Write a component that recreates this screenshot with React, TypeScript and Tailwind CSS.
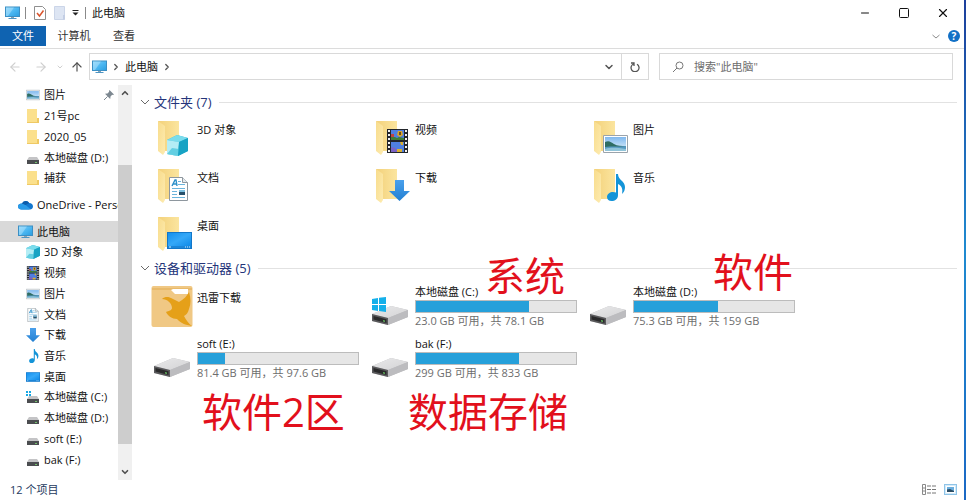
import type { ReactNode } from "react"
import clsx from "clsx"
import { ArrowLeft, ArrowRight, ArrowUp, ChevronDown, ChevronRight, ChevronUp, Minus, Square, X } from "lucide-react"

type IconName =
  | "pc"
  | "cloud"
  | "folder"
  | "cube"
  | "video"
  | "picture"
  | "document"
  | "download"
  | "music"
  | "desktop"
  | "drive"
  | "system-drive"

type NavItem = { name: string; icon: IconName; pinned?: boolean }

type Drive = {
  name: string
  free: number
  total: number
  summary: string
  system?: boolean
  note: string
  noteClass: string
}

const quickAccess: NavItem[] = [
  { name: "图片", icon: "picture", pinned: true },
  { name: "21号pc", icon: "folder" },
  { name: "2020_05", icon: "folder" },
  { name: "本地磁盘 (D:)", icon: "drive" },
  { name: "捕获", icon: "folder" },
]

const computerItems: NavItem[] = [
  { name: "3D 对象", icon: "cube" },
  { name: "视频", icon: "video" },
  { name: "图片", icon: "picture" },
  { name: "文档", icon: "document" },
  { name: "下载", icon: "download" },
  { name: "音乐", icon: "music" },
  { name: "桌面", icon: "desktop" },
  { name: "本地磁盘 (C:)", icon: "system-drive" },
  { name: "本地磁盘 (D:)", icon: "drive" },
  { name: "soft (E:)", icon: "drive" },
  { name: "bak (F:)", icon: "drive" },
]

const folders: NavItem[] = [
  { name: "3D 对象", icon: "cube" },
  { name: "视频", icon: "video" },
  { name: "图片", icon: "picture" },
  { name: "文档", icon: "document" },
  { name: "下载", icon: "download" },
  { name: "音乐", icon: "music" },
  { name: "桌面", icon: "desktop" },
]

const drives: Drive[] = [
  { name: "本地磁盘 (C:)", free: 23, total: 78.1, summary: "23.0 GB 可用，共 78.1 GB", system: true, note: "系统", noteClass: "left-[116px] -top-7" },
  { name: "本地磁盘 (D:)", free: 75.3, total: 159, summary: "75.3 GB 可用，共 159 GB", note: "软件", noteClass: "left-[126px] -top-8" },
  { name: "soft (E:)", free: 81.4, total: 97.6, summary: "81.4 GB 可用，共 97.6 GB", note: "软件2区", noteClass: "left-[51px] top-14" },
  { name: "bak (F:)", free: 299, total: 833, summary: "299 GB 可用，共 833 GB", note: "数据存储", noteClass: "left-[39px] top-14" },
]

function Gradients() {
  return (
    <svg className="absolute size-0" aria-hidden="true">
      <defs>
        <linearGradient id="screen" x1="0" y1="0" x2="1" y2="1">
          <stop offset="0" stopColor="#8fd6fb" />
          <stop offset="0.5" stopColor="#4db8f2" />
          <stop offset="1" stopColor="#2a9de0" />
        </linearGradient>
        <linearGradient id="paper" x1="0" y1="0" x2="1" y2="0">
          <stop offset="0" stopColor="#f3d17a" />
          <stop offset="1" stopColor="#fbe59f" />
        </linearGradient>
        <linearGradient id="flap" x1="0" y1="0" x2="1" y2="1">
          <stop offset="0" stopColor="#f8dc8c" />
          <stop offset="1" stopColor="#fdebb0" />
        </linearGradient>
        <linearGradient id="arrow" x1="0" y1="0" x2="0" y2="1">
          <stop offset="0" stopColor="#4aa0ec" />
          <stop offset="1" stopColor="#2380d2" />
        </linearGradient>
        <linearGradient id="desk" x1="0" y1="0" x2="1" y2="1">
          <stop offset="0" stopColor="#1490ee" />
          <stop offset="0.5" stopColor="#35a8f8" />
          <stop offset="1" stopColor="#0f8ae8" />
        </linearGradient>
        <linearGradient id="sky" x1="0" y1="0" x2="0" y2="1">
          <stop offset="0" stopColor="#7fb8ee" />
          <stop offset="1" stopColor="#e4f3fb" />
        </linearGradient>
        <linearGradient id="metal" x1="0" y1="0" x2="1" y2="1">
          <stop offset="0" stopColor="#e9e9ea" />
          <stop offset="1" stopColor="#d3d3d5" />
        </linearGradient>
      </defs>
    </svg>
  )
}

function PcIcon({ className }: { className: string }) {
  return (
    <svg viewBox="0 0 15 14" className={className} aria-hidden="true">
      <rect x="0.5" y="1" width="14" height="9.5" fill="url(#screen)" stroke="#3b8fc4" />
      <path d="M1 1.5h8L3 10H1z" fill="#b5e5fd" opacity="0.5" />
      <path d="M6 11h3v1H6z" fill="#8ba3b3" />
      <path d="M3.5 12h8v1h-8z" fill="#4e95c4" />
    </svg>
  )
}

function Cube() {
  return (
    <g>
      <path d="M0 5 10 0l11 3v13l-10 5-11-2z" fill="#35b9d4" />
      <path d="M0 5 10 0l11 3-9 4z" fill="#7adcec" />
      <path d="m0 5 12 2-1 14-11-2z" fill="#b4edf5" />
      <path d="m0 19 5-6 7 1-1 7z" fill="#63cfe2" />
      <path d="m12 7 9-4v13l-10 5z" fill="#17a3c4" />
    </g>
  )
}

function Film() {
  return (
    <g>
      <path d="M0 0h21v24H0z" fill="#22252b" />
      <path d="M4 1h13v10H4zM4 13h13v10H4z" fill="#4f7fe0" />
      <path d="M4 8h4l2 1 2-1 5 1v2H4z" fill="#3f7d35" />
      <path d="M4 5h3v3H4z" fill="#c1443f" />
      <path d="M11 2h4l1 4-3 2-3-2z" fill="#d8a62c" />
      <path d="M12 3h2v3h-2z" fill="#6d4a1c" />
      <path d="m4 18 4 1 2 2 1 2H4z" fill="#7a62c5" />
      <path d="M13 13h3v3h-2zM10 20h5v3h-5z" fill="#dbb02f" />
      <path d="M2 1v23M19 1v23" stroke="#f3f3f3" strokeWidth="2" strokeDasharray="2 2" />
    </g>
  )
}

function Photo() {
  return (
    <g>
      <path d="M0.5 0.5h24v17H0.5z" fill="#fff" stroke="#9aa3ab" />
      <path d="M2 2h21v14H2z" fill="url(#sky)" />
      <path d="M2 7c4-2 6 0 9 2s8 2 12 2v2H2z" fill="#2f6d62" />
      <path d="M2 12c6-1 12 0 21-1v5H2z" fill="#5699c0" />
      <path d="M2 14c7-2 12-1 21 0v2H2z" fill="#90c4d9" />
    </g>
  )
}

function Page() {
  return (
    <g>
      <path d="M0.5 0.5h13l5 5v18H0.5z" fill="#fff" stroke="#8e979e" />
      <path d="M13.5 0.5v5h5" fill="#e3e9ed" stroke="#8e979e" />
      <path d="m3 9 3-6h1l1 6M4 7h4" fill="none" stroke="#2b8fc9" strokeWidth="1.4" />
      <path d="M9 4.500h3M9 7.500h7M3 11.500h13M3 14.500h5M3 17.500h5M3 20.500h13" stroke="#6bb4dc" />
      <path d="M10 13h6v5h-6z" fill="#27506b" />
      <path d="M10 13h6v2h-6z" fill="#7dc0e0" />
    </g>
  )
}

function DownArrow() {
  return <path d="M6 0h9v11h6L10.500 21 0 11h6z" fill="url(#arrow)" />
}

function Note() {
  return (
    <path
      d="M9 0h2c0 6 7 7 7 13 0 3-1 5-3 7 1-5 0-8-4-10v11c0 4-3 6-6.500 6C2 27 0 25.500 0 23c0-3 3-5 6-5 1 0 2 .2 3 .6z"
      fill="#1494d8"
    />
  )
}

function Desktop() {
  return (
    <g>
      <path d="M0 0h25v17H0z" fill="#1277c9" />
      <path d="M1 1h23v13H1z" fill="url(#desk)" />
      <path d="M1 14h23v2H1z" fill="#1c86d8" />
      <path d="M2 15h2M18 15h1M20 15h1M22 15h1" stroke="#cdeaff" />
    </g>
  )
}

function DriveBody() {
  return (
    <g>
      <path d="M0 8 19 0l17 4v7l-20 8-16-4z" fill="#bdbdc0" />
      <path d="M0 8 19 0l17 4-20 8z" fill="url(#metal)" />
      <path d="m16 12 20-8v7l-20 8z" fill="#bcbcbf" />
      <path d="m0 8 16 4v7L0 15z" fill="#5a5a5c" />
      <path d="m1.500 10 13 3.300v3.600l-13-3.400z" fill="#2a2a2b" />
      <path d="m11 14 2 .5v1.500l-2-.5z" fill="#5fae5b" />
    </g>
  )
}

function WindowsLogo() {
  return <path d="m0 2 6-1v6H0zm7-1.200L14 0v7H7zM0 8h6v6l-6-1zm7 0h7v7l-7-1z" fill="#15b0ea" />
}

// the shape that sits on the folder, placed inside its 42x40 box
const overlays: Partial<Record<IconName, { shape: ReactNode; at: string }>> = {
  cube: { shape: <Cube />, at: "translate(16 17)" },
  video: { shape: <Film />, at: "translate(18 11)" },
  picture: { shape: <Photo />, at: "translate(16 17)" },
  document: { shape: <Page />, at: "translate(18 11)" },
  download: { shape: <DownArrow />, at: "translate(20 14)" },
  music: { shape: <Note />, at: "translate(20 8)" },
  desktop: { shape: <Desktop />, at: "translate(16 18)" },
}

function FolderIcon({ icon }: { icon: IconName }) {
  const overlay = overlays[icon]
  return (
    <svg viewBox="0 0 42 40" className="h-10 w-[42px] shrink-0" aria-hidden="true">
      <path d="M7 3h21v30H13z" fill="url(#paper)" />
      <path d="m7 3 7 5v26l-2 3-5-4z" fill="url(#flap)" />
      <g transform={overlay?.at}>{overlay?.shape}</g>
    </svg>
  )
}

function SmallIcon({ icon }: { icon: IconName }) {
  if (icon === "pc") return <PcIcon className="h-3.5 w-[15px] shrink-0" />
  if (icon === "cloud") {
    return (
      <svg viewBox="0 0 15 10" className="h-2.5 w-[15px] shrink-0" aria-hidden="true">
        <path d="M4 3.500A4 4 0 0 1 11.200 3C13.500 3 15 4.500 15 6.500S13.500 9.500 12 9.500H3.500C1.500 9.500 0 8.200 0 6.500S1.500 3.500 4 3.500z" fill="#1377cf" />
        <path d="M4 3.500c2 0 3 1 8 5l-1 1H3.500C1.500 9.500 0 8.200 0 6.500S1.500 3.500 4 3.500z" fill="#2a9be8" />
        <path d="M4 3.500A4 4 0 0 1 11.200 3L7.500 5z" fill="#0c5cab" />
      </svg>
    )
  }
  if (icon === "folder") {
    return (
      <svg viewBox="0 0 14 14" className="size-3.5 shrink-0" aria-hidden="true">
        <path d="M1 0h10v9h2v5H1z" fill="#fbe08c" />
        <path d="M11 9h2v5h-2zM1 13h10v1H1z" fill="#efc964" />
      </svg>
    )
  }
  const views: Record<string, { box: string; shape: ReactNode }> = {
    cube: { box: "0 0 21 21", shape: <Cube /> },
    video: { box: "-1 0 23 24", shape: <Film /> },
    picture: { box: "0 -3 25 24", shape: <Photo /> },
    document: { box: "-2 0 23 24", shape: <Page /> },
    download: { box: "0 0 21 21", shape: <DownArrow /> },
    music: { box: "-6 0 27 27", shape: <Note /> },
    desktop: { box: "0 -4 25 25", shape: <Desktop /> },
  }
  const view = views[icon]
  if (view) {
    return (
      <svg viewBox={view.box} className="size-3.5 shrink-0" aria-hidden="true">
        {view.shape}
      </svg>
    )
  }
  return (
    <svg viewBox="0 0 14 14" className="size-3.5 shrink-0" aria-hidden="true">
      <path d="M3 6h8l2 3H1z" fill="#c4c4c6" />
      <path d="M1 9h12v4H1z" fill="#4b4d50" />
      <path d="M9 11h2v1H9z" fill="#74c06d" />
      {icon === "system-drive" && <path d="M0 1h2v2H0zM3 1h2v2H3zM0 4h2v2H0zM3 4h2v2H3z" fill="#15a7e4" />}
    </svg>
  )
}

function XunleiIcon() {
  return (
    <svg viewBox="0 0 42 41" className="h-[41px] w-[42px] shrink-0" aria-hidden="true">
      <rect x="0.5" width="41" height="41" rx="2" fill="#f0c884" />
      <path d="M1 2h40v2H1z" fill="#e2ab52" opacity="0.5" />
      <path d="m20 4 2-1h15v5H24z" fill="#fff" />
      <path
        d="M11 13c3-3 7-2 9-1l8 4c5-3 8-6 10-10 2 6 2 12 0 17-1 4-3 6-5 7 2 4 5 8 8 10-7-1-11-3-15-7-5 0-9-3-11-7 3-1 6-2 6-4 0-5-5-9-10-9z"
        fill="#e5a019"
      />
    </svg>
  )
}

function NavRow({ item, root, selected }: { item: NavItem; root?: boolean; selected?: boolean }) {
  return (
    <button
      type="button"
      className={clsx(
        "flex min-h-4 flex-1 items-center gap-1 whitespace-nowrap pr-1 text-left",
        root ? "pl-[18px]" : "pl-[26px]",
        selected && "bg-[#d9d9d9]"
      )}
    >
      <SmallIcon icon={item.icon} />
      <span>{item.name}</span>
      {item.pinned && (
        <svg viewBox="0 0 10 10" className="ml-auto size-2.5" aria-hidden="true">
          <path d="m5.500 0 4.500 4.500-1 .5-.8-.2L6.500 6.500 6.200 9 1 3.800l2.500-.3 1.700-1.700L5 1z" fill="#7d8891" />
          <path d="M3.600 6.400 0 10" stroke="#7d8891" />
        </svg>
      )}
    </button>
  )
}

function Sidebar() {
  return (
    <aside className="flex w-[132px] shrink-0 pt-px">
      <nav aria-label="导航窗格" className="flex min-w-0 flex-1 flex-col overflow-hidden pb-2.5">
        {quickAccess.map((item) => (
          <NavRow key={item.name} item={item} />
        ))}
        <div className="h-1.5" />
        <NavRow item={{ name: "OneDrive - Personal", icon: "cloud" }} root />
        <div className="h-1.5" />
        <NavRow item={{ name: "此电脑", icon: "pc" }} root selected />
        {computerItems.map((item) => (
          <NavRow key={item.name} item={item} />
        ))}
      </nav>
      <div className="flex w-3.5 flex-col items-center bg-[#f0f0f0] text-[#505050]">
        <button type="button" aria-label="向上滚动" className="grid h-4 place-items-center">
          <ChevronUp className="size-2.5" strokeWidth={4} />
        </button>
        <div className="flex w-full flex-1 flex-col">
          <div className="flex-[64]" />
          <div className="flex-[279] bg-[#cdcdcd]" />
          <div className="flex-[20]" />
        </div>
        <button type="button" aria-label="向下滚动" className="grid h-4 place-items-center">
          <ChevronDown className="size-2.5" strokeWidth={4} />
        </button>
      </div>
    </aside>
  )
}

function GroupHeader({ children }: { children: ReactNode }) {
  return (
    <h2 className="flex h-5 items-center gap-2 text-[13px] text-[#24347a]">
      <button type="button" className="flex items-center gap-1">
        <svg viewBox="0 0 10 10" className="size-2.5" aria-hidden="true">
          <path d="m1 3 4 4 4-4" fill="none" stroke="#6a6a6a" />
        </svg>
        {children}
      </button>
      <span className="h-px flex-1 bg-[#e2e2e2]" />
    </h2>
  )
}

function DriveTile({ drive }: { drive: Drive }) {
  const used = ((drive.total - drive.free) / drive.total) * 100
  return (
    <li className="relative flex gap-1 pt-1">
      <svg viewBox="0 0 42 41" className="h-[41px] w-[42px] shrink-0" aria-hidden="true">
        <g transform="translate(3 20)">
          <DriveBody />
        </g>
        {drive.system && (
          <g transform="translate(3 11)">
            <WindowsLogo />
          </g>
        )}
      </svg>
      <div className="w-[162px] leading-4">
        <p className="-mt-0.5">{drive.name}</p>
        <div className="h-[13px] border border-[#bcbcbc] bg-[#e6e6e6]">
          <div className="h-full bg-[#26a0da]" style={{ width: `${used}%` }} />
        </div>
        <p className="whitespace-nowrap text-[#6d6d6d]">{drive.summary}</p>
      </div>
      <span className={clsx("absolute whitespace-nowrap text-[40px] leading-[44px] text-[#e2101c]", drive.noteClass)}>
        {drive.note}
      </span>
    </li>
  )
}

function TitleBar() {
  return (
    <header className="flex h-[26px] items-center pl-[5px] pr-0.5">
      <PcIcon className="h-3.5 w-[15px]" />
      <span className="ml-[5px] h-3 w-px bg-[#8a8a8a]" />
      <button type="button" aria-label="属性" className="ml-2">
        <svg viewBox="0 0 12 14" className="h-3.5 w-3">
          <path d="M0.500 0.500h8l3 3v10h-11z" fill="#fff" stroke="#8f8f8f" />
          <path d="m3 7 2.500 3L9.500 4.500" fill="none" stroke="#d9532c" strokeWidth="1.500" />
        </svg>
      </button>
      <button type="button" aria-label="新建文件夹" className="ml-2">
        <svg viewBox="0 0 12 14" className="h-3.5 w-3">
          <path d="M0.500 0.500h10v13h-10z" fill="#dde5f3" stroke="#cbd5e8" />
          <path d="M9 9h2v4.500H9z" fill="#c3cee4" />
        </svg>
      </button>
      <button type="button" aria-label="自定义快速访问工具栏" className="ml-1.5">
        <svg viewBox="0 0 7 6" className="h-1.5 w-[7px]">
          <path d="M0.500 0h6v1h-6zM0.500 2.500h6l-3 3z" fill="#222" />
        </svg>
      </button>
      <span className="ml-1.5 mr-1.5 h-3 w-px bg-[#8a8a8a]" />
      <h1>此电脑</h1>
      <div className="ml-auto flex">
        <button type="button" aria-label="最小化" className="grid h-6 w-[39px] place-items-center">
          <Minus className="size-3" strokeWidth={2} />
        </button>
        <button type="button" aria-label="最大化" className="grid h-6 w-[39px] place-items-center">
          <Square className="size-3" strokeWidth={2} rx={0} />
        </button>
        <button type="button" aria-label="关闭" className="grid h-6 w-[39px] place-items-center">
          <X className="size-3.5" strokeWidth={2} />
        </button>
      </div>
    </header>
  )
}

function Ribbon() {
  return (
    <div className="flex h-[23px] items-start border-b border-[#dcdcdc] pr-1 text-[#333]">
      <button type="button" className="h-5 w-[46px] bg-[#0f63b1] text-white">
        文件
      </button>
      <button type="button" className="ml-2 h-5 w-10">
        计算机
      </button>
      <button type="button" className="ml-2 h-5 w-11">
        查看
      </button>
      <button type="button" aria-label="展开功能区" className="ml-auto grid h-5 w-6 place-items-center">
        <svg viewBox="0 0 10 10" className="size-2.5">
          <path d="m1.500 4 3.500 3 3.500-3" fill="none" stroke="#8c8c8c" />
        </svg>
      </button>
      <button type="button" aria-label="帮助" className="mt-1 size-3 rounded-full bg-[#1170c6] text-center text-[10px] leading-3 font-bold text-white">
        ?
      </button>
    </div>
  )
}

function AddressRow() {
  return (
    <div className="flex items-center gap-2.5 pb-1 pl-2 pr-[11px] pt-1">
      <div className="flex min-w-0 flex-1 items-center">
        <div className="flex w-[81px] shrink-0 items-center">
          <button type="button" aria-label="后退" className="text-[#cfcfcf]">
            <ArrowLeft className="size-3.5" />
          </button>
          <button type="button" aria-label="前进" className="ml-3 text-[#cfcfcf]">
            <ArrowRight className="size-3.5" />
          </button>
          <button type="button" aria-label="最近浏览的位置" className="ml-2 text-[#cfcfcf]">
            <ChevronDown className="size-2" strokeWidth={3} />
          </button>
          <button type="button" aria-label="上移" className="ml-1.5 text-[#4f4f4f]">
            <ArrowUp className="size-3.5" />
          </button>
        </div>
        <div className="flex h-[27px] min-w-0 flex-1 items-center border border-[#d9d9d9] pl-0.5">
          <PcIcon className="h-3.5 w-[15px]" />
          <ChevronRight className="ml-1 size-2.5 text-[#555]" strokeWidth={3} />
          <a href="#" className="ml-1">
            此电脑
          </a>
          <ChevronRight className="ml-1 size-2.5 text-[#555]" strokeWidth={3} />
          <button type="button" aria-label="以前的位置" className="ml-auto grid h-full w-[25px] place-items-center">
            <ChevronDown className="size-3 text-[#555]" strokeWidth={3} />
          </button>
          <button type="button" aria-label="刷新" className="grid h-full w-[27px] place-items-center border-l border-[#d9d9d9]">
            <svg viewBox="0 0 10 10" className="size-2.5">
              <path d="M1 1h3v3M3.500 2A4 4 0 1 0 7 2.200" fill="none" stroke="#555" strokeWidth="1.300" />
            </svg>
          </button>
        </div>
      </div>
      <label className="flex h-[27px] w-[294px] items-center gap-2.5 border border-[#d9d9d9] pl-3">
        <svg viewBox="0 0 12 12" className="size-3" aria-hidden="true">
          <circle cx="7.500" cy="4.500" r="3.500" fill="none" stroke="#777" />
          <path d="M5 7 1 11" stroke="#777" />
        </svg>
        <input
          type="search"
          aria-label="搜索"
          placeholder={'搜索"此电脑"'}
          className="min-w-0 flex-1 outline-none placeholder:text-[#6d6d6d]"
        />
      </label>
    </div>
  )
}

export default function App() {
  return (
    <div className="flex h-screen bg-white font-['Open_Sans','Noto_Sans_CJK_SC',sans-serif] text-[11px] leading-4 text-[#111]">
      <Gradients />
      <div className="flex min-w-0 flex-1 flex-col overflow-hidden">
        <TitleBar />
        <Ribbon />
        <AddressRow />

        <div className="flex min-h-0 flex-1">
          <Sidebar />
          <main className="min-w-0 flex-1 overflow-hidden pl-2 pr-[7px] pt-2">
            <section>
              <GroupHeader>文件夹 (7)</GroupHeader>
              <ul className="grid grid-cols-[repeat(auto-fill,218px)] pl-[11px] pt-1.5">
                {folders.map((folder) => (
                  <li key={folder.name} className="flex h-12 gap-1">
                    <FolderIcon icon={folder.icon} />
                    <span className="pt-1">{folder.name}</span>
                  </li>
                ))}
              </ul>
            </section>

            <section className="-mt-1">
              <GroupHeader>设备和驱动器 (5)</GroupHeader>
              <ul className="grid auto-rows-[52px] grid-cols-[repeat(auto-fill,218px)] pl-[11px] pt-1">
                <li className="flex gap-1 pt-1">
                  <XunleiIcon />
                  <span className="pt-1">迅雷下载</span>
                </li>
                {drives.map((drive) => (
                  <DriveTile key={drive.name} drive={drive} />
                ))}
              </ul>
            </section>
          </main>
        </div>

        <footer className="flex h-5 items-center gap-2 pb-px pl-2.5 pr-[7px] text-[#24395e]">
          <span>12 个项目</span>
          <button type="button" aria-label="详细信息" className="ml-auto">
            <svg viewBox="0 0 14 11" className="h-[11px] w-3.5">
              <path d="M0.500 0.500h3v10h-3zM0.500 4h3M0.500 7h3" fill="none" stroke="#8a8a8a" />
              <path d="M5 2h9M5 5.500h9M5 9h9" stroke="#777" strokeDasharray="4 1" />
            </svg>
          </button>
          <button type="button" aria-label="大图标" className="border border-[#8fc4e8] bg-[#d5ebf9] p-px">
            <svg viewBox="0 0 9 7" className="h-[7px] w-[9px]">
              <path d="M0 0h9v7H0z" fill="#fff" />
              <path d="M1 1h7v5H1z" fill="#6aaede" />
              <path d="M1 3.500 4 3l4 2v1H1z" fill="#2b4c63" />
            </svg>
          </button>
        </footer>
      </div>
      {/* strip of wallpaper past the window edge */}
      <div className="w-0.5 bg-linear-to-b from-[#1d3f9c] via-[#1f8ad0] to-[#1b68c4]" />
    </div>
  )
}
